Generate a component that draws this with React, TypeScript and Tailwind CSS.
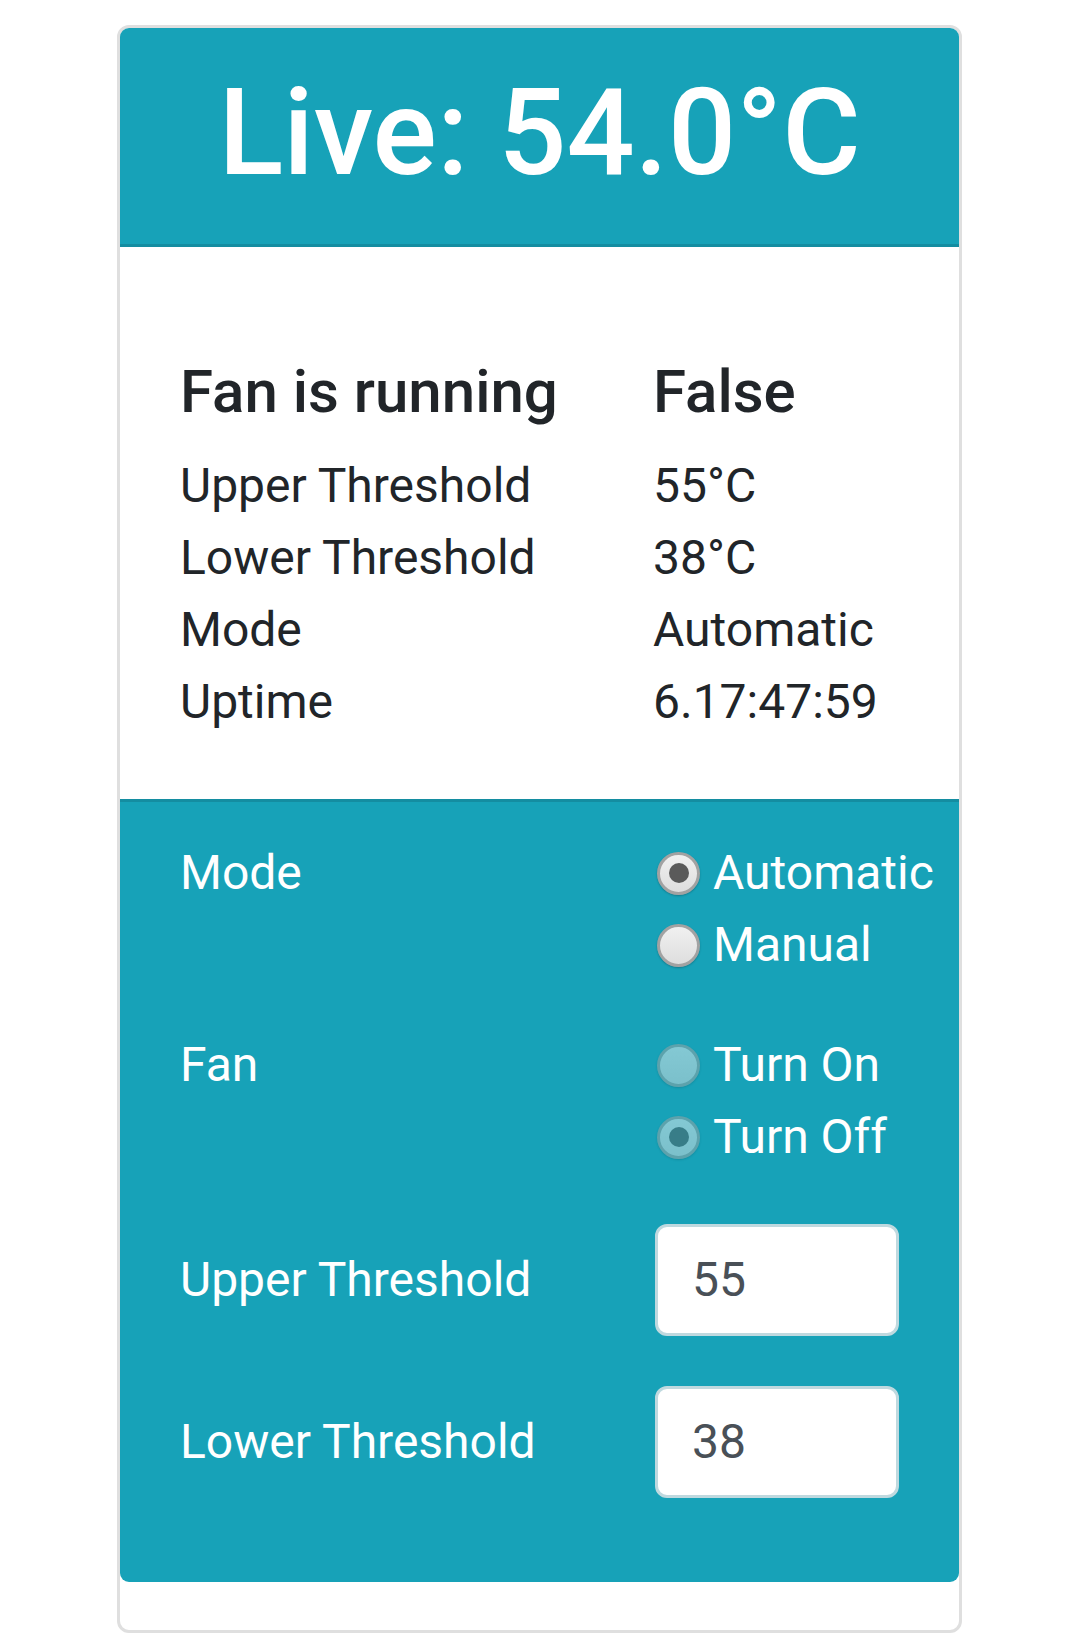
import React from "react";

function Radio({ checked, disabled }: { checked?: boolean; disabled?: boolean }) {
  return (
    <div
      className={
        "ml-[2px] flex h-[43px] w-[43px] shrink-0 items-center justify-center rounded-full border-[3px] border-[#a2a2a2] bg-[linear-gradient(#f0f0f0,#dedede)] shadow-[0_1px_2px_rgba(0,0,0,0.25)] " +
        (disabled ? "opacity-50" : "")
      }
    >
      {checked ? <div className="h-[20px] w-[20px] rounded-full bg-[#5a5a5a]" /> : null}
    </div>
  );
}

function RadioLine({ label, checked, disabled }: { label: string; checked?: boolean; disabled?: boolean }) {
  return (
    <div className="flex h-[72px] items-center gap-[13px]">
      <Radio checked={checked} disabled={disabled} />
      <span>{label}</span>
    </div>
  );
}

function InputBox({ value }: { value: string }) {
  return (
    <div className="flex h-[112px] w-[244px] items-center rounded-[12px] border-[3px] border-[#bfd9df] bg-white px-[34px] text-[48px] leading-[72px] text-[#495057]">
      {value}
    </div>
  );
}

export default function App() {
  const rows: [string, string][] = [
    ["Upper Threshold", "55°C"],
    ["Lower Threshold", "38°C"],
    ["Mode", "Automatic"],
    ["Uptime", "6.17:47:59"],
  ];
  return (
    <div className="min-h-[1651px] bg-white pt-[25px] font-[Roboto,Arial,sans-serif]">
      <div className="mx-auto w-[845px] rounded-[12px] border-[3px] border-[#dfdfdf] bg-white">
        <div className="rounded-t-[9px] border-b-[3px] border-[rgba(0,0,0,0.125)] bg-[#17a2b8] pt-[33px] pb-[39px] text-center text-[120px] font-medium leading-[144px] text-white">
          Live: 54.0°C
        </div>

        <div className="px-[60px] pt-[109px] pb-[61px] text-[#212529]">
          <div className="grid grid-cols-[473px_1fr] text-[60px] font-medium leading-[72px]">
            <div>Fan is running</div>
            <div>False</div>
          </div>
          <div className="mt-[22px] grid grid-cols-[473px_1fr] text-[48px] leading-[72px]">
            {rows.map(([k, v]) => (
              <React.Fragment key={k}>
                <div>{k}</div>
                <div>{v}</div>
              </React.Fragment>
            ))}
          </div>
        </div>

        <div className="rounded-b-[9px] border-t-[3px] border-[rgba(0,0,0,0.125)] bg-[#17a2b8] px-[60px] pt-[35px] pb-[84px] text-[48px] leading-[72px] text-white">
          <div className="grid grid-cols-[475px_1fr] items-start">
            <div>Mode</div>
            <div>
              <RadioLine label="Automatic" checked />
              <RadioLine label="Manual" />
            </div>
          </div>
          <div className="mt-[48px] grid grid-cols-[475px_1fr] items-start">
            <div>Fan</div>
            <div>
              <RadioLine label="Turn On" disabled />
              <RadioLine label="Turn Off" checked disabled />
            </div>
          </div>
          <div className="mt-[51px] grid grid-cols-[475px_1fr] items-center">
            <div>Upper Threshold</div>
            <InputBox value="55" />
          </div>
          <div className="mt-[50px] grid grid-cols-[475px_1fr] items-center">
            <div>Lower Threshold</div>
            <InputBox value="38" />
          </div>
        </div>
        <div className="h-[48px]" />
      </div>
    </div>
  );
}
